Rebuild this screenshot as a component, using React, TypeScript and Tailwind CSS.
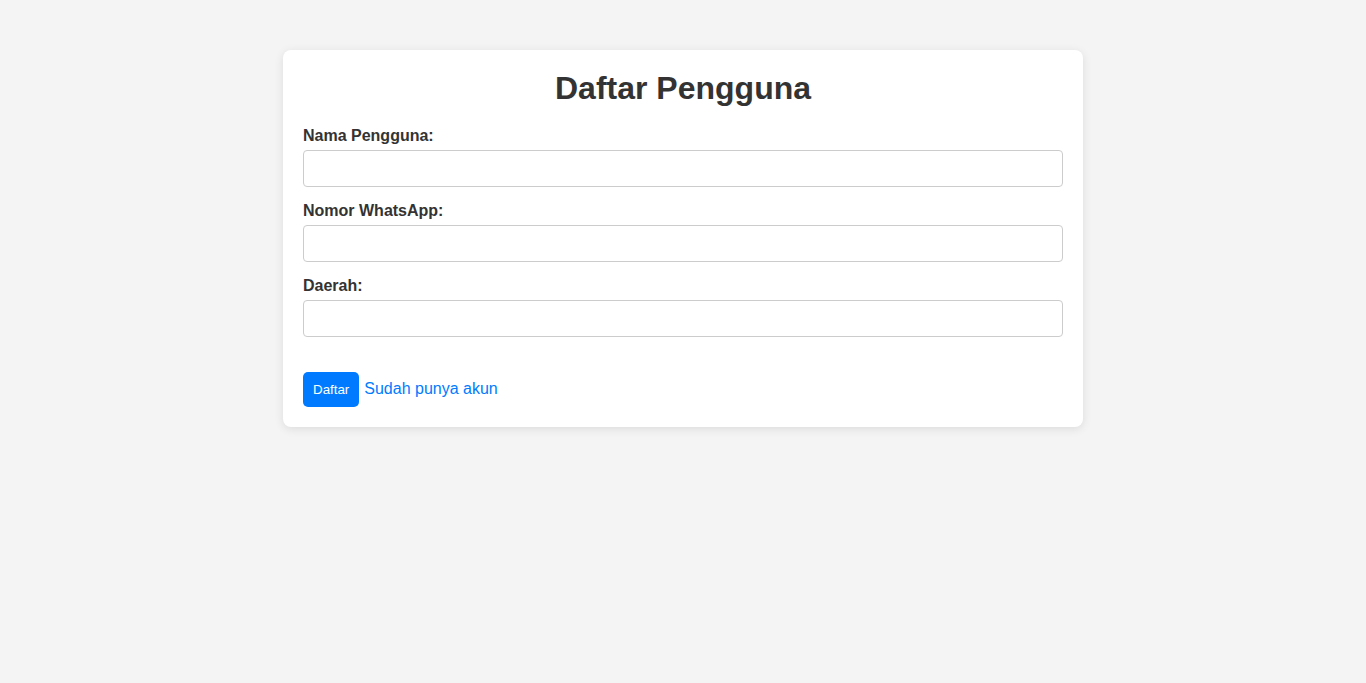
export default function App() {
  const fields = ["Nama Pengguna:", "Nomor WhatsApp:", "Daerah:"];

  return (
    <div className="min-h-screen bg-[#f4f4f4] pt-[50px] font-['Liberation_Sans',Arial,sans-serif] text-[#333]">
      <div className="mx-auto w-[800px] rounded-lg bg-white p-5 shadow-[0_2px_10px_rgba(0,0,0,0.1)]">
        <h1 className="mb-5 text-center text-[32px] font-bold leading-[37px]">
          Daftar Pengguna
        </h1>

        <form onSubmit={(e) => e.preventDefault()}>
          {fields.map((label) => (
            <div key={label}>
              <label className="mb-[5px] block text-base font-bold leading-[18px]">
                {label}
              </label>
              <input
                type="text"
                className="mb-[15px] block h-[37px] w-full rounded border border-[#ccc] px-[10px] text-base outline-none"
              />
            </div>
          ))}

          <div className="mt-[35px] flex items-center gap-[5px]">
            <button
              type="submit"
              className="h-[35px] rounded-[5px] bg-[#007bff] px-[10px] text-[13.33px] text-white"
            >
              Daftar
            </button>
            <a href="#" className="-mt-[2px] text-base text-[#007bff]">
              Sudah punya akun
            </a>
          </div>
        </form>
      </div>
    </div>
  );
}
